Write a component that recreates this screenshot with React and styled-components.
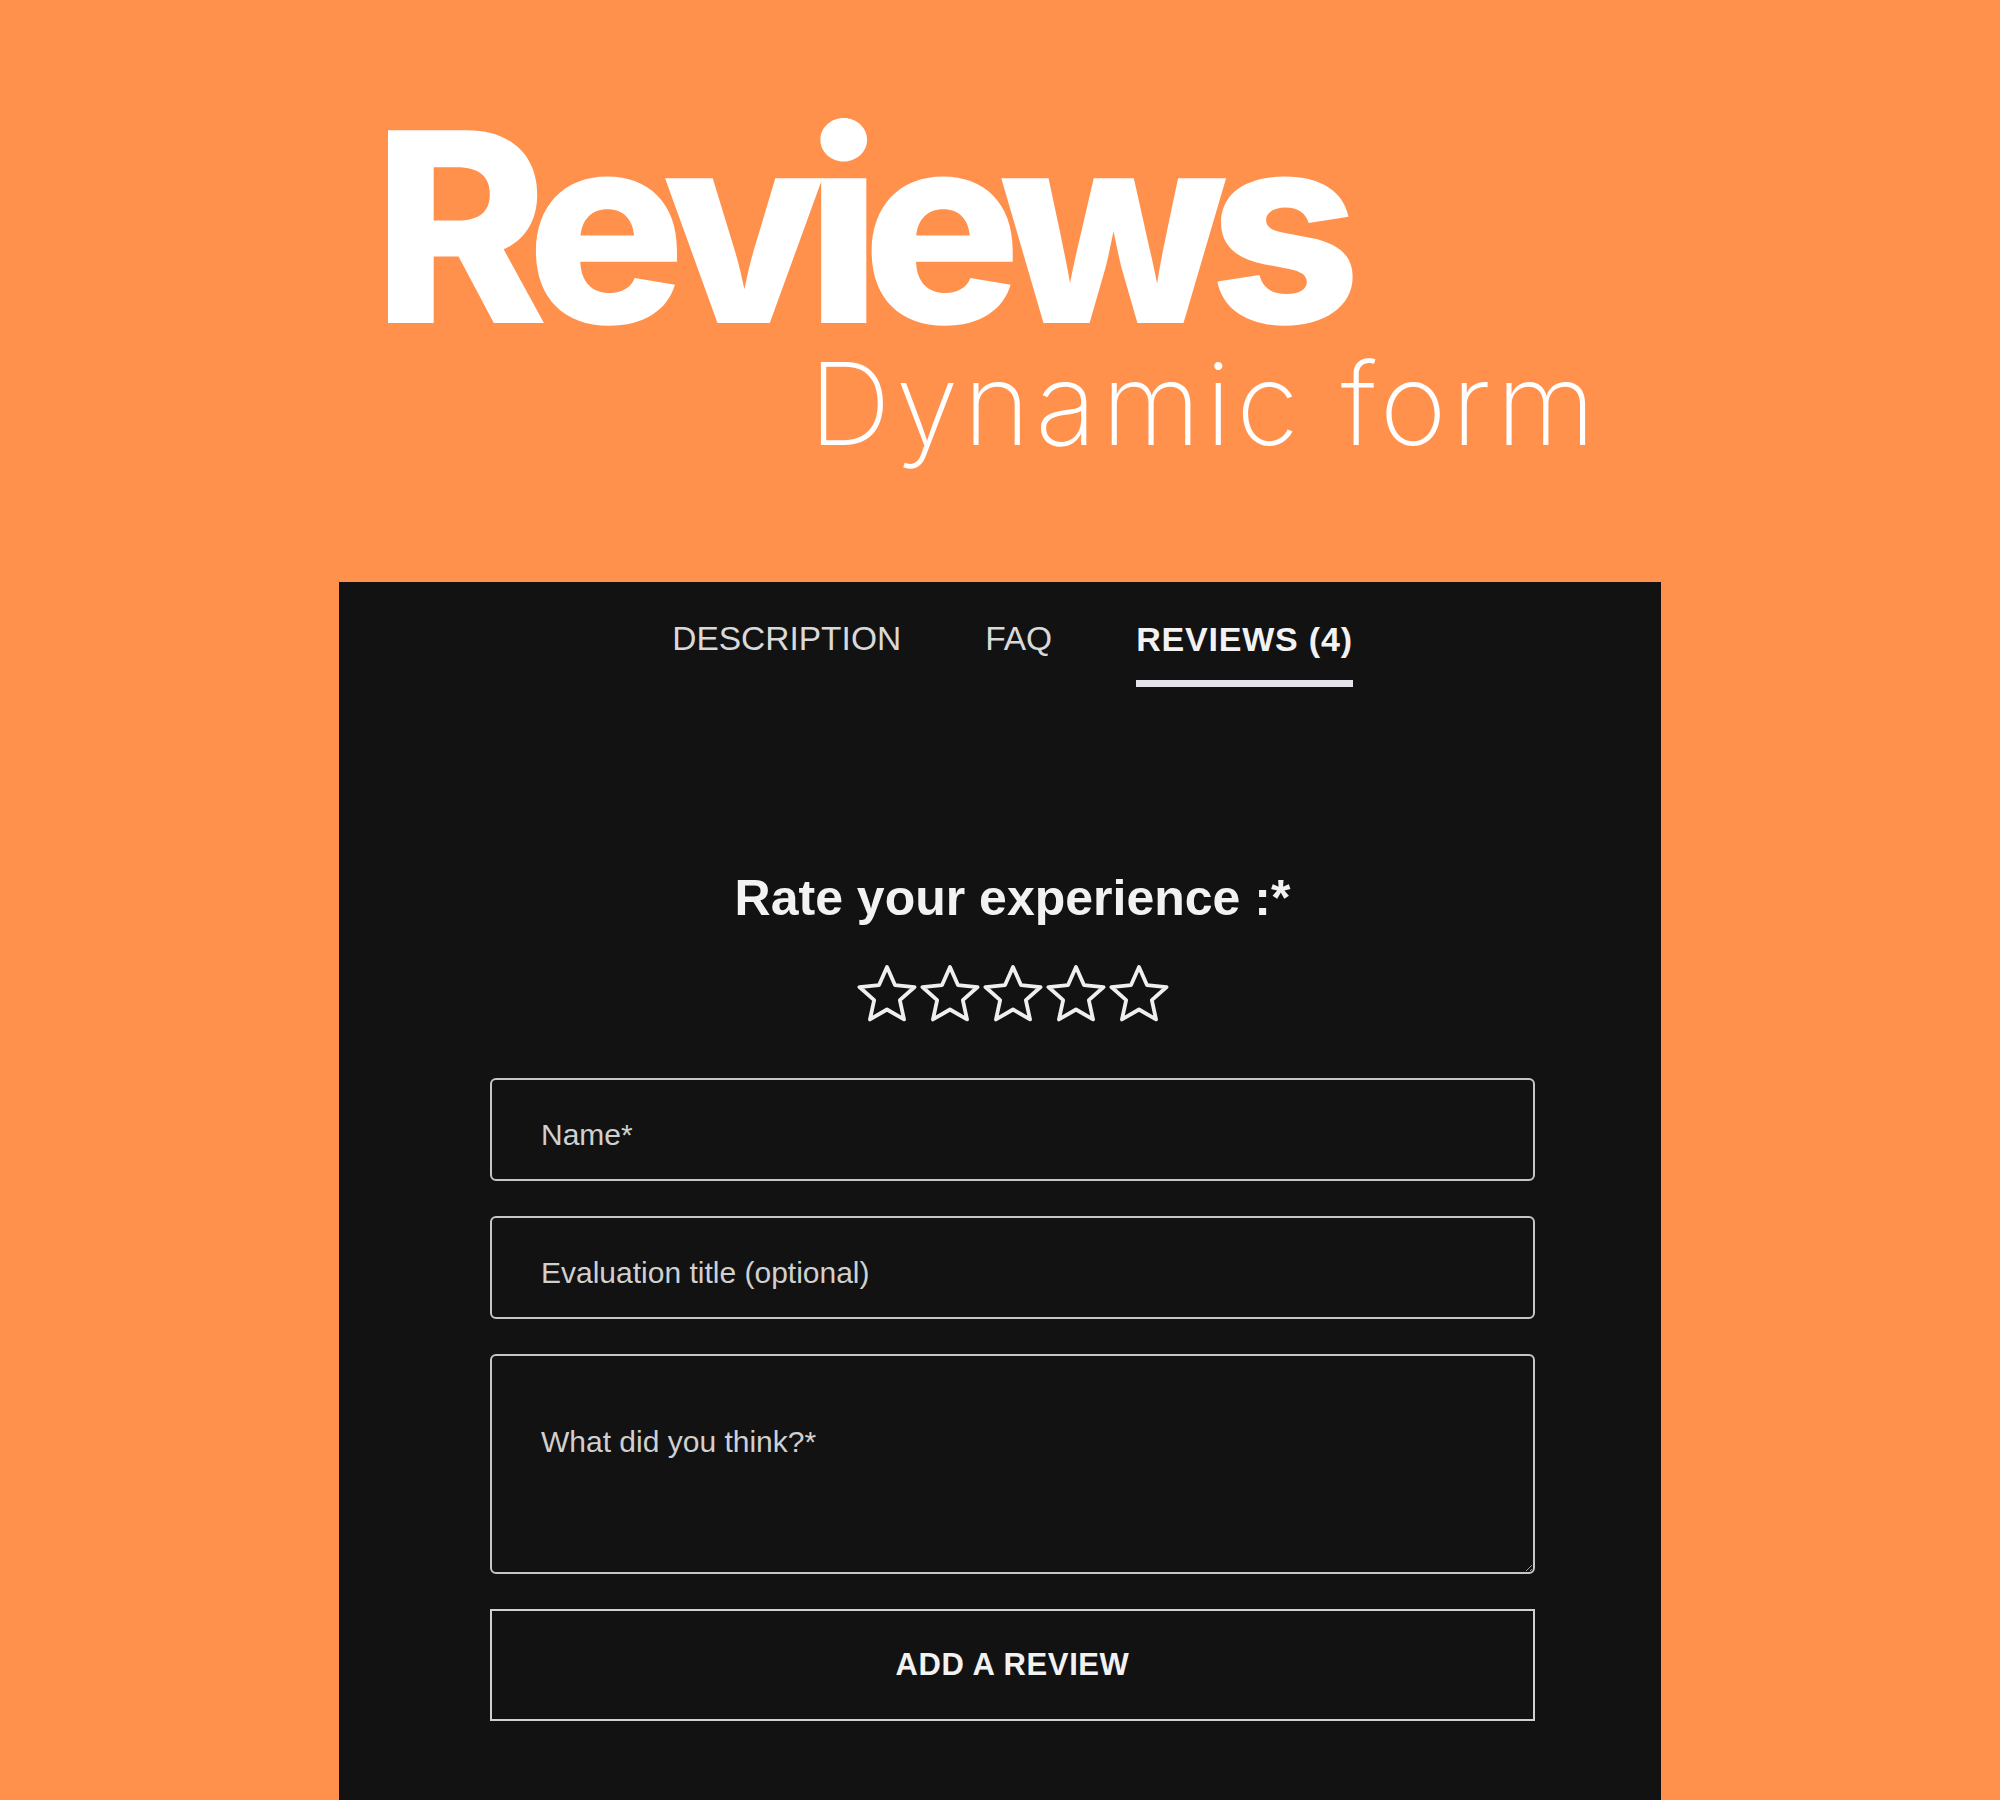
import React from "react";
import styled, { createGlobalStyle } from "styled-components";

const GlobalStyle = createGlobalStyle`
  html, body { margin: 0; padding: 0; }
  body {
    background: #ff914d;
    font-family: "Liberation Sans", Arial, sans-serif;
  }
  * { box-sizing: border-box; }
`;

const Page = styled.div`
  width: 2000px;
  height: 1800px;
  overflow: hidden;
  background: #ff914d;
  display: flex;
  flex-direction: column;
  align-items: center;
`;

const Hero = styled.header`
  width: 100%;
  padding: 127px 0 0 373px;
  display: flex;
  flex-direction: column;
  height: 582px;
`;

const Title = styled.h1`
  margin: 0;
  font-family: "Inter", "Liberation Sans", sans-serif;
  font-weight: 800;
  font-size: 265px;
  line-height: 200px;
  letter-spacing: -19px;
  color: #ffffff;
`;

const Subtitle = styled.h2`
  margin: 17px 0 0 436px;
  font-family: "Inter", "Lato", sans-serif;
  font-weight: 200;
  font-size: 114px;
  line-height: 120px;
  letter-spacing: 5px;
  color: #ffffff;
`;

const Panel = styled.section`
  width: 1322px;
  flex: 1;
  background: #121212;
  padding: 37px 126px 0 151px;
  display: flex;
  flex-direction: column;
  align-items: center;
`;

const Tabs = styled.nav`
  display: flex;
  gap: 84px;
`;

const Tab = styled.div`
  font-family: "Liberation Sans", Arial, sans-serif;
  font-size: ${(p) => (p.$active ? "34px" : "33.5px")};
  line-height: 40px;
  font-weight: ${(p) => (p.$active ? 700 : 400)};
  color: ${(p) => (p.$active ? "#f2f2f4" : "#d9d9d9")};
  padding-bottom: 21px;
  border-bottom: 7px solid ${(p) => (p.$active ? "#e4e4ea" : "transparent")};
  letter-spacing: ${(p) => (p.$active ? "0.8px" : "0")};
`;

const Heading = styled.h3`
  margin: 181px 0 0 0;
  font-family: "Liberation Sans", Arial, sans-serif;
  font-weight: 700;
  font-size: 50px;
  line-height: 60px;
  color: #f2f2f2;
`;

const Stars = styled.div`
  display: flex;
  gap: 3px;
  margin-top: 36px;
  height: 60px;
`;

const Form = styled.form`
  width: 100%;
  margin-top: 54px;
  display: flex;
  flex-direction: column;
  gap: 35px;
`;

const fieldBase = `
  width: 100%;
  background: transparent;
  border: 2px solid #c6c6c6;
  border-radius: 6px;
  color: #eeeeee;
  font-family: "Liberation Sans", Arial, sans-serif;
  font-size: 30px;
  padding: 0 0 0 49px;
  outline: none;
  &::placeholder { color: #d0d0d0; opacity: 1; }
`;

const Input = styled.input`
  ${fieldBase}
  height: 103px;
  padding-top: 10px;
`;

const TextArea = styled.textarea`
  ${fieldBase}
  height: 220px;
  padding-top: 66px;
  line-height: 1.3;
  resize: vertical;
  display: block;
`;

const Submit = styled.button`
  height: 112px;
  width: 100%;
  background: transparent;
  border: 2px solid #d0d0d0;
  border-radius: 0;
  color: #f2f2f2;
  font-family: "Liberation Sans", Arial, sans-serif;
  font-weight: 700;
  font-size: 31px;
  letter-spacing: 0.6px;
  cursor: pointer;
`;

const Star = () => {
  const cx = 30, cy = 32, R = 29, r = 13.5;
  const pts = [];
  for (let i = 0; i < 10; i++) {
    const rad = i % 2 === 0 ? R : r;
    const a = (-90 + i * 36) * (Math.PI / 180);
    pts.push(`${(cx + rad * Math.cos(a)).toFixed(2)},${(cy + rad * Math.sin(a)).toFixed(2)}`);
  }
  return (
    <svg width="60" height="60" viewBox="0 0 60 60" aria-hidden="true">
      <polygon
        points={pts.join(" ")}
        fill="none"
        stroke="#efefef"
        strokeWidth="3.8"
        strokeLinejoin="round"
      />
    </svg>
  );
};

export default function App() {
  return (
    <>
      <GlobalStyle />
      <Page>
        <Hero>
          <Title>Reviews</Title>
          <Subtitle>Dynamic form</Subtitle>
        </Hero>
        <Panel>
          <Tabs>
            <Tab>DESCRIPTION</Tab>
            <Tab>FAQ</Tab>
            <Tab $active>REVIEWS (4)</Tab>
          </Tabs>
          <Heading>Rate your experience :*</Heading>
          <Stars>
            {[0, 1, 2, 3, 4].map((i) => (
              <Star key={i} />
            ))}
          </Stars>
          <Form onSubmit={(e) => e.preventDefault()}>
            <Input placeholder="Name*" />
            <Input placeholder="Evaluation title (optional)" />
            <TextArea placeholder="What did you think?*" />
            <Submit type="submit">ADD A REVIEW</Submit>
          </Form>
        </Panel>
      </Page>
    </>
  );
}
